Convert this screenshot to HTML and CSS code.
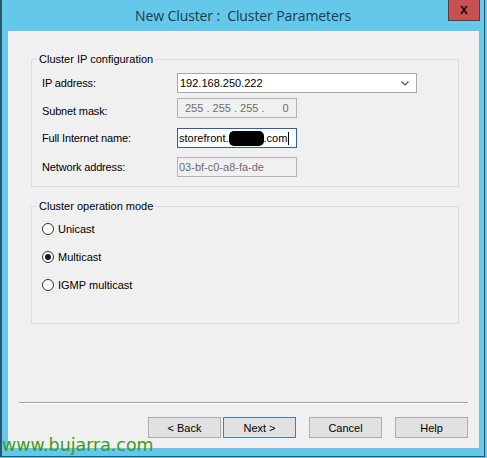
FILE: index.html
```html
<!DOCTYPE html>
<html>
<head>
<meta charset="utf-8">
<title>New Cluster : Cluster Parameters</title>
<link rel="stylesheet" href="styles.css">
</head>
<body>
<div class="window">
  <div class="titlebar">
    <div class="title-spacer"></div>
    <div class="title">New Cluster :&nbsp; Cluster Parameters</div>
    <div class="close">x</div>
  </div>
  <div class="client">
    <fieldset class="group group-ip">
      <legend>Cluster IP configuration</legend>
      <div class="row row-1">
        <span class="label">IP address:</span>
        <div class="combo">
          <span class="combo-text">192.168.250.222</span>
          <svg class="chevron" width="8" height="5" viewBox="0 0 8 5"><polyline points="0.5,0.5 4,4 7.5,0.5" fill="none" stroke="#555" stroke-width="1.2"/></svg>
        </div>
      </div>
      <div class="row row-2">
        <span class="label label-low">Subnet mask:</span>
        <div class="box disabled ipbox">255 . 255 . 255 .<span class="last-octet">0</span></div>
      </div>
      <div class="row row-3">
        <span class="label">Full Internet name:</span>
        <div class="box focused">storefront.<span class="redact"></span>.com<span class="caret"></span></div>
      </div>
      <div class="row row-4">
        <span class="label">Network address:</span>
        <div class="box disabled">03-bf-c0-a8-fa-de</div>
      </div>
    </fieldset>
    <fieldset class="group group-mode">
      <legend>Cluster operation mode</legend>
      <div class="radio-row first"><span class="radio"></span><span>Unicast</span></div>
      <div class="radio-row"><span class="radio checked"></span><span>Multicast</span></div>
      <div class="radio-row"><span class="radio"></span><span>IGMP multicast</span></div>
    </fieldset>
    <div class="separator"></div>
    <div class="buttons">
      <div class="btn">&lt; Back</div>
      <div class="btn btn-default">Next &gt;</div>
      <div class="btn btn-gap">Cancel</div>
      <div class="btn btn-gap">Help</div>
    </div>
  </div>
</div>
<div class="watermark">www.bujarra.com</div>
</body>
</html>
```
FILE: styles.css
```css
html, body {
  margin: 0;
  padding: 0;
  background: #63c8ea;
}
body {
  font-family: "Liberation Sans", Arial, sans-serif;
  font-size: 11px;
  color: #000;
  position: relative;
  width: 487px;
  height: 458px;
  overflow: hidden;
}
.window {
  width: 485px;
  height: 457px;
  box-sizing: border-box;
  background: #63c8ea;
  border-left: 2px solid #2a5468;
  border-right: 1px solid #2a5468;
  border-bottom: 1px solid #2a5468;
  display: flex;
  flex-direction: column;
}
.titlebar {
  height: 31px;
  display: flex;
  align-items: flex-start;
  flex: none;
}
.title-spacer {
  width: 36px;
  flex: none;
}
.title {
  flex: 1;
  text-align: center;
  font-family: "Open Sans", "Noto Sans", sans-serif;
  font-size: 14px;
  letter-spacing: -0.1px;
  line-height: 31px;
  color: #1d3a4b;
}
.close {
  width: 32px;
  height: 21px;
  box-sizing: border-box;
  margin-right: 4px;
  background: #c75050;
  border: 1px solid #5b3b3b;
  border-top: none;
  display: flex;
  align-items: center;
  justify-content: center;
  font: bold 14px "Liberation Sans", Arial, sans-serif;
  color: #111;
  padding-bottom: 2px;
}
.client {
  margin-left: 6px;
  width: 471px;
  height: 417px;
  flex: none;
  box-sizing: border-box;
  background: #f0f0f0;
  display: flex;
  flex-direction: column;
  padding-top: 22px;
}
.group {
  margin: 0 0 0 23px;
  width: 428px;
  box-sizing: border-box;
  border: 1px solid #dcdcdc;
  padding: 0 10px 9px 10px;
  min-width: 0;
}
.group legend {
  padding: 0 2px;
  margin-left: -5px;
  font-size: 11px;
  line-height: 13px;
}
.group-mode {
  margin-top: 13px;
  padding-bottom: 31px;
}
.row {
  display: flex;
  align-items: center;
  height: 20px;
}
.row-1 { margin-top: 7px; }
.row-2 { margin-top: 5px; }
.row-3 { margin-top: 10px; }
.row-4 { margin-top: 9px; }
.label {
  width: 135px;
  flex: none;
  letter-spacing: -0.15px;
}
.label-low { margin-top: 6px; }
.combo {
  width: 240px;
  height: 20px;
  box-sizing: border-box;
  background: #fff;
  border: 1px solid #a9a9a9;
  display: flex;
  align-items: center;
  padding: 0 7px 0 2px;
}
.combo-text { flex: 1; }
.box {
  width: 120px;
  height: 20px;
  box-sizing: border-box;
  border: 1px solid #a9a9a9;
  background: #fff;
  display: flex;
  align-items: center;
  padding-left: 1px;
  white-space: pre;
}
.box.disabled {
  background: #f0f0f0;
  border-color: #b4b4b4;
  color: #6d6d6d;
  padding-left: 1px;
}
.box.ipbox { padding-left: 7px; }
.last-octet { margin-left: 18px; }
.box.focused {
  border-color: #2c5fa8;
}
.redact {
  display: inline-block;
  width: 35px;
  height: 15px;
  background: #000;
  border-radius: 5px;
}
.caret {
  display: inline-block;
  width: 1px;
  height: 13px;
  background: #000;
  margin-left: 1px;
}
.radio-row {
  display: flex;
  align-items: center;
  height: 14px;
  margin-top: 14px;
}
.radio-row.first { margin-top: 9px; }
.radio {
  width: 12px;
  height: 12px;
  box-sizing: border-box;
  border: 1px solid #333;
  border-radius: 50%;
  background: #fff;
  margin-right: 4px;
  display: flex;
  align-items: center;
  justify-content: center;
}
.radio.checked::after {
  content: "";
  width: 6px;
  height: 6px;
  border-radius: 50%;
  background: #1a1a1a;
}
.separator {
  margin: 78px 11px 0 11px;
  border-top: 1px solid #a0a0a0;
  border-bottom: 1px solid #fff;
}
.buttons {
  display: flex;
  justify-content: flex-end;
  margin: 13px 11px 0 0;
}
.btn {
  width: 73px;
  height: 21px;
  box-sizing: border-box;
  background: #e1e1e1;
  border: 1px solid #adadad;
  display: flex;
  align-items: center;
  justify-content: center;
  margin-left: 2px;
}
.btn-default { border-color: #3c7fb1; }
.btn-gap { margin-left: 13px; }
.watermark {
  position: absolute;
  left: 2px;
  top: 437px;
  font-family: "DejaVu Sans", Verdana, sans-serif;
  font-size: 17.4px;
  line-height: 17px;
  color: #3a9b22;
}
```
